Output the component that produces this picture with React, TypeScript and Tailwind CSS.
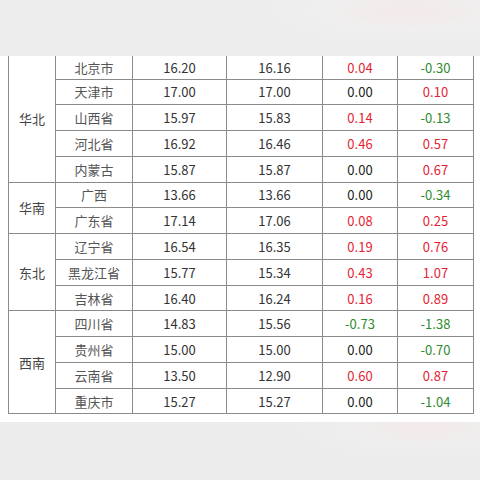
import React from "react";

type Row = { name: string; a: string; b: string; c: string; d: string };
type Region = { region: string; rows: Row[] };

const data: Region[] = [
    {
        region: "华北",
        rows: [
            { name: "北京市", a: "16.20", b: "16.16", c: "0.04", d: "-0.30" },
            { name: "天津市", a: "17.00", b: "17.00", c: "0.00", d: "0.10" },
            { name: "山西省", a: "15.97", b: "15.83", c: "0.14", d: "-0.13" },
            { name: "河北省", a: "16.92", b: "16.46", c: "0.46", d: "0.57" },
            { name: "内蒙古", a: "15.87", b: "15.87", c: "0.00", d: "0.67" },
        ],
    },
    {
        region: "华南",
        rows: [
            { name: "广西", a: "13.66", b: "13.66", c: "0.00", d: "-0.34" },
            { name: "广东省", a: "17.14", b: "17.06", c: "0.08", d: "0.25" },
        ],
    },
    {
        region: "东北",
        rows: [
            { name: "辽宁省", a: "16.54", b: "16.35", c: "0.19", d: "0.76" },
            { name: "黑龙江省", a: "15.77", b: "15.34", c: "0.43", d: "1.07" },
            { name: "吉林省", a: "16.40", b: "16.24", c: "0.16", d: "0.89" },
        ],
    },
    {
        region: "西南",
        rows: [
            { name: "四川省", a: "14.83", b: "15.56", c: "-0.73", d: "-1.38" },
            { name: "贵州省", a: "15.00", b: "15.00", c: "0.00", d: "-0.70" },
            { name: "云南省", a: "13.50", b: "12.90", c: "0.60", d: "0.87" },
            { name: "重庆市", a: "15.27", b: "15.27", c: "0.00", d: "-1.04" },
        ],
    },
];

// colour of a change value: up red, down green, flat dark
const tone = (v: string) => {
    if (v.startsWith("-")) return "text-[#2e8b2e]";
    if (parseFloat(v) > 0) return "text-[#e61e32]";
    return "text-[#222222]";
};

const cell = "border border-[#8a8a8a] text-center align-middle p-0";

export default function App() {
    let first = true;
    return (
        <div
            className="w-[480px] h-[480px] bg-white flex flex-col overflow-hidden"
            style={{ fontFamily: '"Noto Sans CJK SC", "Noto Sans", sans-serif' }}
        >
            {/* blurred page area above the table */}
            <div className="h-[56px] shrink-0 bg-[radial-gradient(ellipse_30%_60%_at_85%_20%,#f3e9e9_0%,#f0efef_60%,#ededed_100%)]" />

            <div className="pl-[8px]">
                <table className="table-fixed border-collapse text-[13px] leading-none">
                    <colgroup>
                        <col className="w-[47px]" />
                        <col className="w-[77px]" />
                        <col className="w-[94px]" />
                        <col className="w-[96px]" />
                        <col className="w-[75px]" />
                        <col className="w-[76px]" />
                    </colgroup>
                    <tbody>
                        {data.map((g) =>
                            g.rows.map((r, i) => {
                                const top = first;
                                first = false;
                                const bt = top ? " border-t-0" : "";
                                return (
                                    <tr key={r.name} className={top ? "h-[23px]" : "h-[25.77px]"}>
                                        {i === 0 && (
                                            <td rowSpan={g.rows.length} className={cell + bt + " text-[#444444]"}>
                                                {g.region}
                                            </td>
                                        )}
                                        <td className={cell + bt + " text-[#555555]"}>{r.name}</td>
                                        <td className={cell + bt + " text-[#333333]"}>{r.a}</td>
                                        <td className={cell + bt + " text-[#333333]"}>{r.b}</td>
                                        <td className={cell + bt + " " + tone(r.c)}>{r.c}</td>
                                        <td className={cell + bt + " " + tone(r.d)}>{r.d}</td>
                                    </tr>
                                );
                            })
                        )}
                    </tbody>
                </table>
            </div>

            <div className="h-[8px] shrink-0" />
            {/* blurred page area below */}
            <div className="flex-1 bg-[radial-gradient(ellipse_25%_50%_at_88%_10%,#f3e9e9_0%,#efeeee_60%,#ececec_100%)]" />
        </div>
    );
}
